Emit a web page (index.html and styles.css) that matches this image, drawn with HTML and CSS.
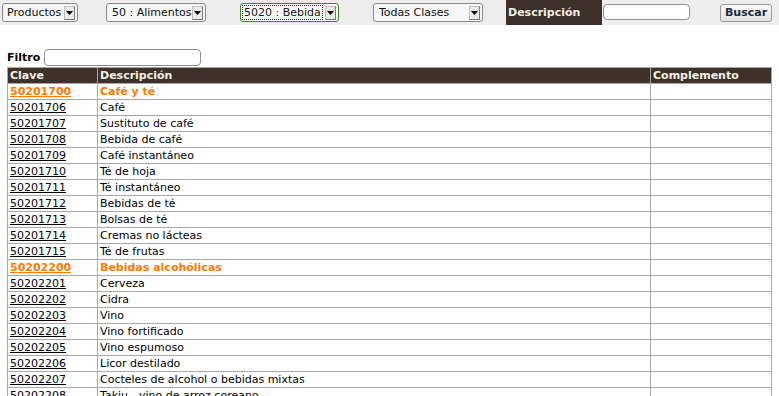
FILE: index.html
```html
<!DOCTYPE html>
<html>
<head>
<meta charset="utf-8">
<link rel="stylesheet" href="styles.css">
</head>
<body>
<div class="bar">
  <div class="sel s1"><span class="txt">Productos</span><span class="btn"><svg width="7" height="4" viewBox="0 0 7 4"><path d="M0 0H7L3.5 4Z" fill="#000"/></svg></span></div>
  <div class="sel s2"><span class="txt">50 : Alimentos</span><span class="btn"><svg width="7" height="4" viewBox="0 0 7 4"><path d="M0 0H7L3.5 4Z" fill="#000"/></svg></span></div>
  <div class="sel s3 focus"><span class="txt"><span class="dot">5020 : Bebida</span></span><span class="btn"><svg width="7" height="4" viewBox="0 0 7 4"><path d="M0 0H7L3.5 4Z" fill="#000"/></svg></span></div>
  <div class="sel s4"><span class="txt">Todas Clases</span><span class="btn"><svg width="7" height="4" viewBox="0 0 7 4"><path d="M0 0H7L3.5 4Z" fill="#000"/></svg></span></div>
  <div class="lbl">Descripción</div>
  <div class="inp"></div>
  <div class="buscar">Buscar</div>
</div>
<div class="filtro"><span class="flabel">Filtro</span><span class="finp"></span></div>
<table class="tbl">
  <thead>
    <tr><th class="c1">Clave</th><th class="c2">Descripción</th><th class="c3">Complemento</th></tr>
  </thead>
  <tbody>
    <tr class="grp"><td><a>50201700</a></td><td>Café y té</td><td></td></tr>
    <tr><td><a>50201706</a></td><td>Café</td><td></td></tr>
    <tr><td><a>50201707</a></td><td>Sustituto de café</td><td></td></tr>
    <tr><td><a>50201708</a></td><td>Bebida de café</td><td></td></tr>
    <tr><td><a>50201709</a></td><td>Café instantáneo</td><td></td></tr>
    <tr><td><a>50201710</a></td><td>Té de hoja</td><td></td></tr>
    <tr><td><a>50201711</a></td><td>Té instantáneo</td><td></td></tr>
    <tr><td><a>50201712</a></td><td>Bebidas de té</td><td></td></tr>
    <tr><td><a>50201713</a></td><td>Bolsas de té</td><td></td></tr>
    <tr><td><a>50201714</a></td><td>Cremas no lácteas</td><td></td></tr>
    <tr><td><a>50201715</a></td><td>Té de frutas</td><td></td></tr>
    <tr class="grp"><td><a>50202200</a></td><td>Bebidas alcohólicas</td><td></td></tr>
    <tr><td><a>50202201</a></td><td>Cerveza</td><td></td></tr>
    <tr><td><a>50202202</a></td><td>Cidra</td><td></td></tr>
    <tr><td><a>50202203</a></td><td>Vino</td><td></td></tr>
    <tr><td><a>50202204</a></td><td>Vino fortificado</td><td></td></tr>
    <tr><td><a>50202205</a></td><td>Vino espumoso</td><td></td></tr>
    <tr><td><a>50202206</a></td><td>Licor destilado</td><td></td></tr>
    <tr><td><a>50202207</a></td><td>Cocteles de alcohol o bebidas mixtas</td><td></td></tr>
    <tr><td><a>50202208</a></td><td>Takju - vino de arroz coreano</td><td></td></tr>
  </tbody>
</table>
</body>
</html>
```
FILE: styles.css
```css
html, body {
  margin: 0;
  padding: 0;
  overflow: hidden;
  background: #fff;
  font-family: "DejaVu Sans", Verdana, sans-serif;
  color: #000;
}
.bar {
  height: 25px;
  background: #ededed;
  display: flex;
  align-items: flex-start;
}
.sel {
  margin-top: 3px;
  height: 17px;
  border: 1px solid #8a8a8a;
  border-radius: 3px;
  background: #f6f6f6;
  display: flex;
  align-items: center;
  font-size: 11px;
  box-sizing: content-box;
  overflow: hidden;
}
.sel .txt {
  flex: 1;
  padding-left: 4px;
  white-space: nowrap;
  overflow: hidden;
  line-height: 17px;
  color: #111;
}
.sel .btn {
  width: 9px;
  height: 12px;
  margin-right: 2px;
  background: #e8e8e8;
  border: 1px solid #c0c0c0;
  border-right-color: #7a7a7a;
  border-bottom-color: #7a7a7a;
  display: flex;
  align-items: center;
  justify-content: center;
  flex: none;
}
.s1 { margin-left: 2px; width: 74px; }
.s2 { margin-left: 28px; width: 98px; }
.s3 { margin-left: 34px; width: 97px; border-color: #3a8a2a; background: #fff; }
.s4 { margin-left: 34px; width: 108px; }
.s2 .txt { padding-left: 5px; }
.s3 .txt { padding-left: 2px; }
.s4 .txt { padding-left: 5px; }
.dot {
  outline: 1px dotted #222;
  padding: 0 1px;
}
.lbl {
  margin-left: 23px;
  width: 96px;
  height: 25px;
  background: #3d3129;
  color: #f2efe4;
  font-weight: bold;
  font-size: 11px;
  line-height: 25px;
  padding-left: 2px;
  box-sizing: border-box;
}
.inp {
  margin-left: 1px;
  margin-top: 4px;
  width: 87px;
  height: 16px;
  border: 1px solid #8f8f8f;
  border-radius: 4px;
  background: #fff;
  box-sizing: border-box;
}
.buscar {
  margin-left: 30px;
  margin-top: 4px;
  width: 52px;
  height: 18px;
  border: 1px solid #9a9a9a;
  border-radius: 3px;
  background: linear-gradient(#f8f8f8, #e2e2e2);
  box-sizing: border-box;
  font-weight: bold;
  font-size: 11px;
  color: #1c2a45;
  text-align: center;
  line-height: 16px;
}
.filtro {
  display: flex;
  align-items: center;
  margin: 24px 0 0 7px;
  height: 17px;
}
.flabel {
  font-weight: bold;
  font-size: 11px;
  width: 37px;
}
.finp {
  width: 157px;
  height: 17px;
  border: 1px solid #8f8f8f;
  border-radius: 4px;
  box-sizing: border-box;
  background: #fff;
}
.tbl {
  margin: 1px 0 0 7px;
  width: 765px;
  border-collapse: collapse;
  font-size: 11px;
  table-layout: fixed;
}
.tbl th, .tbl td {
  border: 1px solid #a8a8a8;
  padding: 0 0 0 2px;
  height: 15px;
  line-height: 15px;
  text-align: left;
  white-space: nowrap;
  overflow: hidden;
}
.tbl th {
  background: #3d3129;
  color: #f2efe4;
  font-weight: bold;
}
.c1 { width: 87px; }
.c2 { width: 550px; }
.tbl a {
  color: #000;
  text-decoration: underline;
}
.grp td, .grp a {
  color: #ff7a00;
  font-weight: bold;
}
```
